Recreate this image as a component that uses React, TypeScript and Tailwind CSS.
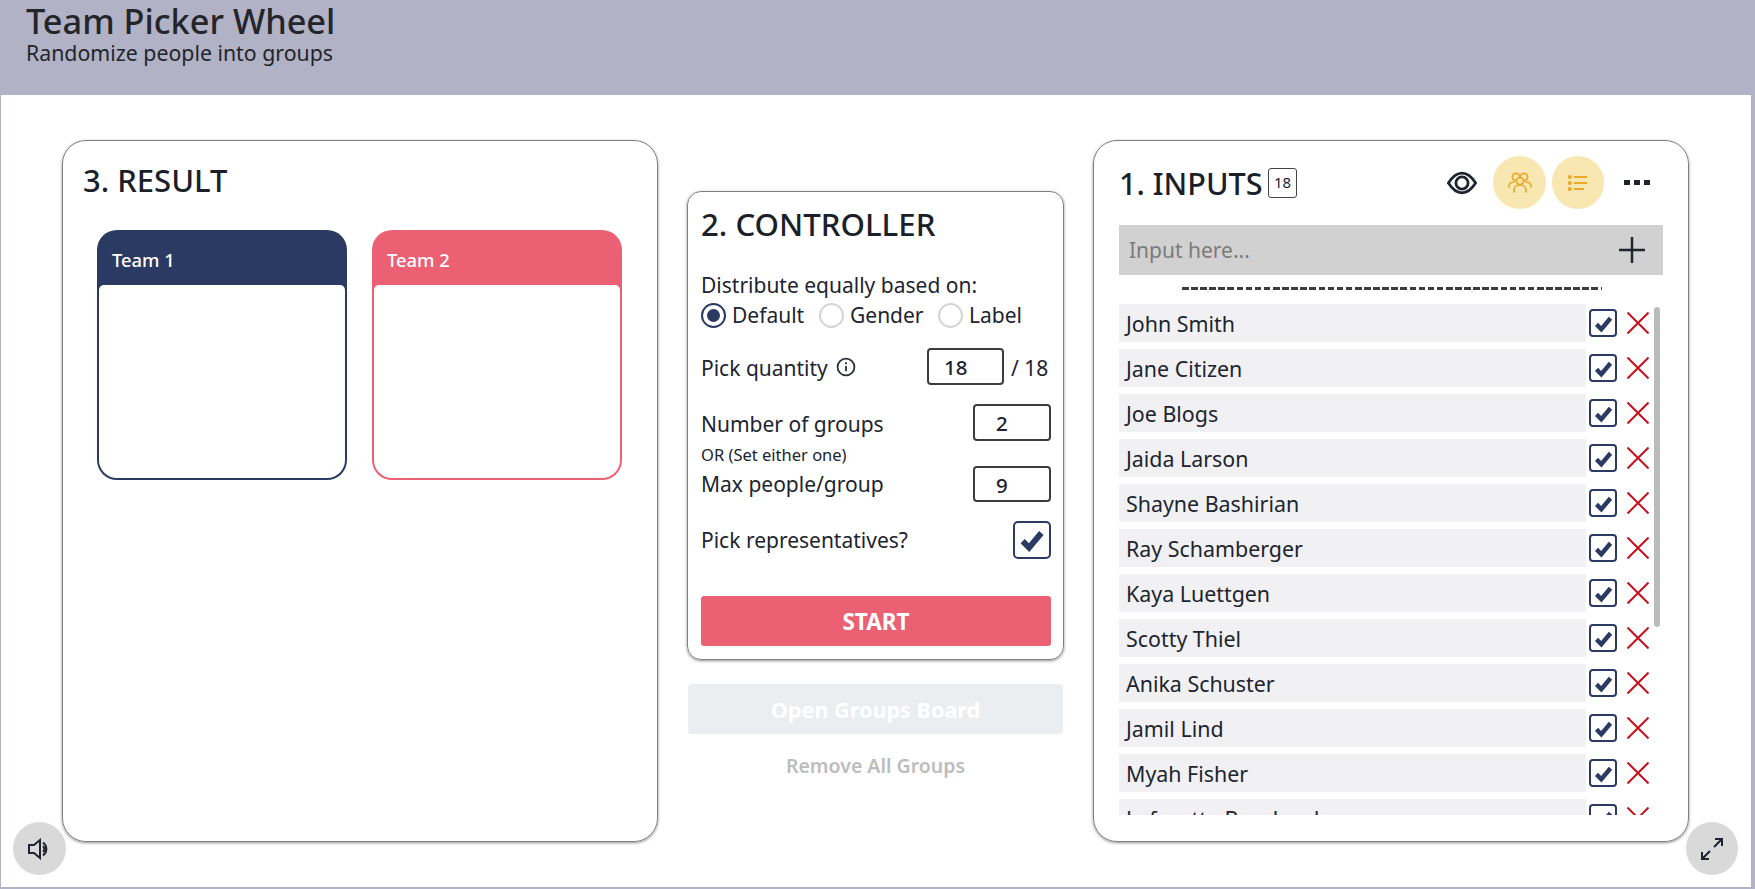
import React from "react";

const font = "font-['Noto_Sans',sans-serif]";
const names = ["John Smith","Jane Citizen","Joe Blogs","Jaida Larson","Shayne Bashirian","Ray Schamberger","Kaya Luettgen","Scotty Thiel","Anika Schuster","Jamil Lind","Myah Fisher","Lafayette Bernhard"];

function Check({ size, stroke }: { size: number; stroke: number }) {
  return (
    <svg width={size} height={size} viewBox="0 0 24 24" fill="none">
      <path d="M4 13l5.500 5.500L20 6" stroke="#2b3a63" strokeWidth={stroke} strokeLinejoin="miter" />
    </svg>
  );
}

function Radio({ on, label, className }: { on?: boolean; label: string; className: string }) {
  return (
    <div className={`flex items-center ${className}`}>
      <span className={`flex h-[25px] w-[25px] items-center justify-center rounded-full border-2 ${on ? "border-[#2b3a63]" : "border-[#d4d4d4]"}`}>
        {on && <span className="h-[13px] w-[13px] rounded-full bg-[#2b3a63]" />}
      </span>
      <span className="ml-[6px] text-[21px] leading-[30px]">{label}</span>
    </div>
  );
}

function NumBox({ value, w, pad }: { value: string; w: string; pad: string }) {
  return (
    <div className={`flex items-center rounded-[4px] border-2 border-[#3c3c3c] pt-[2px] text-[20.500px] font-medium text-[#1c2230] ${w} ${pad}`}>{value}</div>
  );
}

function Team({ name, bg }: { name: string; bg: string }) {
  return (
    <div className={`flex h-[250px] w-[250px] flex-col overflow-hidden rounded-[20px] ${bg}`}>
      <div className="flex h-[55px] items-center pl-[15px] pt-[5px] text-[18.400px] font-medium text-white">{name}</div>
      <div className="mx-[2px] mb-[2px] flex-1 rounded-t-[5px] rounded-b-[18px] bg-white" />
    </div>
  );
}

export default function App() {
  return (
    <div className={`relative h-[889px] w-[1755px] overflow-hidden border-b-2 border-l border-r-4 border-[#b1b2c5] bg-white text-[#20242f] ${font}`}>
      <header className="-ml-px h-[95px] bg-[#b1b2c5] pl-[26px] text-[#24252b]">
        <h1 className="text-[34.300px] font-medium leading-[41px]">Team Picker Wheel</h1>
        <p className="text-[21.300px] leading-[24px]">Randomize people into groups</p>
      </header>

      <main className="flex items-start pl-[61px] pt-[45px]">
        <section className="h-[702px] w-[596px] rounded-[24px] border border-[#808080] shadow-[0_1px_3px_rgba(0,0,0,0.45)]">
          <h2 className="pl-[20px] pt-[19px] text-[31px] font-medium leading-[40px] text-[#1b1f2a]">3. RESULT</h2>
          <div className="flex gap-[25px] pl-[34px] pt-[30px]">
            <Team name="Team 1" bg="bg-[#2b3a63]" />
            <Team name="Team 2" bg="bg-[#ec6074]" />
          </div>
        </section>

        <div className="ml-[29px] mt-[51px] w-[377px]">
          <section className="h-[469px] rounded-[14px] border border-[#808080] pl-[13px] pr-[12px] shadow-[0_1px_3px_rgba(0,0,0,0.45)]">
            <h2 className="pt-[12px] text-[31.200px] font-medium leading-[41px] text-[#1b1f2a]">2. CONTROLLER</h2>
            <p className="pt-[25px] text-[21px] leading-[30px]">Distribute equally based on:</p>
            <div className="flex">
              <Radio on label="Default" className="w-[118px]" />
              <Radio label="Gender" className="w-[119px]" />
              <Radio label="Label" className="w-[100px]" />
            </div>
            <div className="mt-[18px] flex items-center">
              <span className="pt-[3px] text-[21px] leading-[34px]">Pick quantity</span>
              <svg className="ml-[8px]" width="20" height="20" viewBox="0 0 19 19" fill="none" stroke="#2b2f38" strokeWidth="1.700">
                <circle cx="9.5" cy="9.5" r="8" />
                <path d="M9.5 8.5v5M9.5 5v1.8" />
              </svg>
              <NumBox value="18" w="ml-auto h-[37px] w-[77px]" pad="pl-[15px]" />
              <span className="ml-[7px] w-[40px] whitespace-nowrap pt-[3px] text-[21px] leading-[34px]">/ 18</span>
            </div>
            <div className="mt-[19px] flex items-center justify-between">
              <span className="pt-[3px] text-[21px] leading-[34px]">Number of groups</span>
              <NumBox value="2" w="h-[37px] w-[78px]" pad="pl-[21px]" />
            </div>
            <p className="pt-[2px] text-[16.500px] leading-[23px]">OR (Set either one)</p>
            <div className="flex items-center justify-between">
              <span className="pt-[1px] text-[21px] leading-[35px]">Max people/group</span>
              <NumBox value="9" w="h-[36px] w-[78px]" pad="pl-[21px]" />
            </div>
            <div className="mt-[19px] flex items-center justify-between">
              <span className="pt-[1px] text-[21px] leading-[37px]">Pick representatives?</span>
              <span className="flex h-[38px] w-[38px] items-center justify-center rounded-[5px] border-2 border-[#2b3a63]">
                <Check size={28} stroke={5} />
              </span>
            </div>
            <button className="mt-[37px] h-[50px] w-full rounded-[3px] bg-[#ec6074] pt-[2px] text-[22.500px] font-bold text-white">START</button>
          </section>
          <button className="ml-[1px] mt-[24px] h-[50px] w-[375px] rounded-[4px] bg-[#ecedf0] pt-[3px] text-[21.600px] font-bold text-white">Open Groups Board</button>
          <p className="pt-[17px] text-center text-[19.500px] font-semibold leading-[30px] text-[#bdbdbd]">Remove All Groups</p>
        </div>

        <section className="ml-[29px] h-[702px] w-[596px] rounded-[24px] border border-[#808080] pl-[25px] shadow-[0_1px_3px_rgba(0,0,0,0.45)]">
          <div className="flex h-[84px] items-center pb-[1px]">
            <h2 className="w-[141px] whitespace-nowrap text-[30.600px] font-medium leading-[40px] text-[#1b1f2a]">1. INPUTS</h2>
            <span className="ml-[8px] flex h-[30px] w-[29px] items-center justify-center rounded-[3px] border border-[#444] text-[15px]">18</span>
            <svg className="ml-[150px]" width="30" height="26" viewBox="0 0 32 26" fill="none" stroke="#20242f" strokeWidth="3">
              <path d="M1.500 13C6 6 11 2.500 16 2.500S26 6 30.500 13C26 20 21 23.500 16 23.500S6 20 1.500 13z" />
              <circle cx="16" cy="13" r="6.500" />
            </svg>
            <span className="ml-[16px] flex h-[53px] w-[53px] items-center justify-center rounded-full bg-[#f9e7b2]">
              <svg width="24" height="22" viewBox="0 0 24 22" fill="none" stroke="#eaa92a" strokeWidth="1.7" strokeLinecap="round">
                <circle cx="8" cy="5" r="3.6" />
                <circle cx="16" cy="5" r="3.6" />
                <circle cx="12" cy="9" r="3.4" fill="#f9e7b2" />
                <path d="M1 15c0-3 2-5 5-5M23 15c0-3-2-5-5-5M6 20v-2c0-3 2.500-5 6-5s6 2 6 5v2" />
              </svg>
            </span>
            <span className="ml-[6px] flex h-[53px] w-[52px] items-center justify-center rounded-full bg-[#f9e7b2]">
              <svg width="20" height="16" viewBox="0 0 20 16" fill="none" stroke="#eaa92a" strokeWidth="2">
                <path d="M6 2h13M6 8h13M6 14h10" />
                <circle cx="1.800" cy="2" r="1" />
                <circle cx="1.800" cy="8" r="1" />
                <circle cx="1.800" cy="14" r="1" />
              </svg>
            </span>
            <span className="ml-[20px] flex gap-[4px]">
              <span className="h-[5px] w-[6px] bg-[#20242f]" />
              <span className="h-[5px] w-[6px] bg-[#20242f]" />
              <span className="h-[5px] w-[6px] bg-[#20242f]" />
            </span>
          </div>
          <div className="flex h-[50px] w-[544px] items-center justify-between bg-[#d1d1d1] pl-[10px] pr-[18px]">
            <span className="pt-[1px] text-[21px] text-[#7b7b7b]">Input here...</span>
            <svg width="26" height="26" viewBox="0 0 26 26" stroke="#20242f" strokeWidth="2.500">
              <path d="M13 0v26M0 13h26" />
            </svg>
          </div>
          <div className="ml-[63px] mt-[12px] h-[3px] w-[420px] bg-[repeating-linear-gradient(90deg,#3c3c3c_0,#3c3c3c_6.600px,transparent_6.600px,transparent_9.100px)]" />
          <div className="relative mt-[14px] h-[511px] w-[544px] overflow-hidden">
            {names.map((n) => (
              <div key={n} className="mb-[7px] flex h-[38px] items-center">
                <div className="flex h-[38px] w-[467px] items-center bg-[#f1f1f3] pl-[7px] pt-[3px] text-[21.400px]">{n}</div>
                <span className="ml-[3px] flex h-[28px] w-[28px] items-center justify-center rounded-[4px] border-2 border-[#2b3a63]">
                  <Check size={21} stroke={5} />
                </span>
                <svg className="ml-[10px]" width="22" height="22" viewBox="0 0 22 22" stroke="#c8101e" strokeWidth="2">
                  <path d="M0.500 0.500l21 21M21.500 0.500l-21 21" />
                </svg>
              </div>
            ))}
            <div className="absolute left-[535px] top-[3px] h-[320px] w-[6px] rounded-full bg-[#bbbbbb]" />
          </div>
        </section>
      </main>

      <button className="absolute bottom-[12px] left-[12px] flex h-[53px] w-[53px] items-center justify-center rounded-full bg-[#d9d9d9]">
        <svg width="24" height="22" viewBox="0 0 24 22" fill="none" stroke="#20242f" strokeWidth="2">
          <path d="M1 7h5l6-5v18l-6-5H1z" />
          <path d="M15 8a4 4 0 010 6M15 4.500a8 8 0 010 13" />
        </svg>
      </button>
      <button className="absolute bottom-[12px] right-[13px] flex h-[53px] w-[52px] items-center justify-center rounded-full bg-[#d9d9d9]">
        <svg width="24" height="24" viewBox="0 0 24 24" fill="none" stroke="#20242f" strokeWidth="2">
          <path d="M15 2h7v7M22 2l-8 8M2 15v7h7M2 22l8-8" />
        </svg>
      </button>
    </div>
  );
}
